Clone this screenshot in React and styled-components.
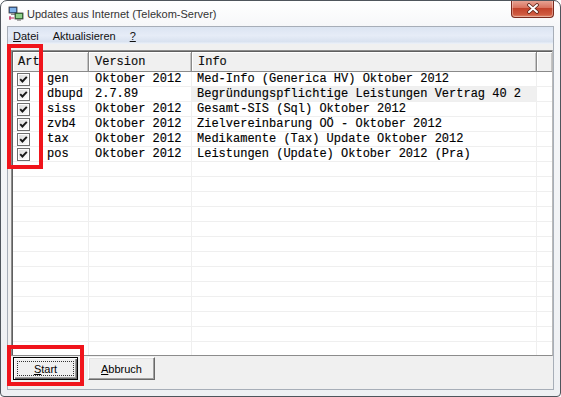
import styled, { createGlobalStyle } from "styled-components"

const GlobalStyle = createGlobalStyle`
  html, body { margin: 0; padding: 0; background: #ffffff; }
  #root { width: 561px; height: 397px; }
`

const COLS = "76px 103px 345px 1fr"

const rows = [
  { art: "gen", version: "Oktober 2012", info: "Med-Info (Generica HV) Oktober 2012" },
  { art: "dbupd", version: "2.7.89", info: "Begründungspflichtige Leistungen Vertrag 40 2", tip: true },
  { art: "siss", version: "Oktober 2012", info: "Gesamt-SIS (Sql) Oktober 2012" },
  { art: "zvb4", version: "Oktober 2012", info: "Zielvereinbarung OÖ - Oktober 2012" },
  { art: "tax", version: "Oktober 2012", info: "Medikamente (Tax) Update Oktober 2012" },
  { art: "pos", version: "Oktober 2012", info: "Leistungen (Update) Oktober 2012 (Pra)" },
]

const EMPTY_ROWS = 14

const Window = styled.div`
  position: relative;
  box-sizing: border-box;
  width: 561px;
  height: 397px;
  border: 1px solid #4f555c;
  border-radius: 7px 7px 4px 4px;
  background: linear-gradient(to bottom, #ffffff 0, #f6f7f9 26px, #eef0f3 100%);
  padding: 0 6px 6px;
  display: flex;
  flex-direction: column;
  overflow: hidden;
  font-family: "Liberation Sans", Arial, sans-serif;
`

const TitleBar = styled.div`
  height: 25px;
  display: flex;
  align-items: center;
  flex-shrink: 0;
`

const TitleIcon = styled.svg`
  width: 16px;
  height: 16px;
  margin-left: 1px;
  margin-right: 3px;
`

const TitleText = styled.span`
  font-size: 11px;
  color: #333;
`

const CloseButton = styled.div`
  margin-left: auto;
  align-self: flex-start;
  margin-top: -1px;
  width: 43px;
  height: 18px;
  box-sizing: border-box;
  border: 1px solid #7a2a1e;
  border-top: none;
  border-radius: 0 0 4px 4px;
  background: linear-gradient(to bottom, #e9a99a 0, #d9735f 45%, #c2432c 50%, #cf5a40 85%, #e08a6e 100%);
  box-shadow: inset 0 0 0 1px rgba(255, 255, 255, 0.35);
  display: flex;
  align-items: center;
  justify-content: center;
`

const Client = styled.div`
  flex: 1;
  display: flex;
  flex-direction: column;
  border: 1px solid #a7aeb8;
  background: #f0f0f0;
`

const MenuBar = styled.div`
  height: 17px;
  flex-shrink: 0;
  display: flex;
  align-items: center;
  background: linear-gradient(to bottom, #dbe4f2 0, #e6ecf7 50%, #d9e2f0 85%, #eef2f9 100%);
  font-size: 11px;
  color: #111;
`

const MenuItem = styled.span`
  padding: 0 7px;
  &:first-child { padding-left: 5px; }
  u { text-decoration: underline; text-underline-offset: 1px; }
`

const ListView = styled.div`
  margin: 6px 0 0 3px;
  height: 306px;
  box-sizing: border-box;
  flex-shrink: 0;
  border: 1px solid #8c8c8c;
  border-right-color: #b9b9b9;
  background: #ffffff;
  display: flex;
  flex-direction: column;
  overflow: hidden;
`

const ListInner = styled.div`
  flex: 1;
  border-top: 1px solid #5f5f5f;
  border-left: 1px solid #5f5f5f;
  display: flex;
  flex-direction: column;
  overflow: hidden;
  font-family: "Liberation Mono", "Courier New", monospace;
  font-size: 12px;
  color: #000;
  -webkit-text-stroke: 0.15px #000;
`

const Header = styled.div`
  display: grid;
  grid-template-columns: ${COLS};
  height: 20px;
  flex-shrink: 0;
  background: #f0f0f0;
  border-bottom: 1px solid #8a8a8a;
  box-sizing: border-box;
`

const HeaderCell = styled.div`
  display: flex;
  align-items: center;
  padding-left: ${p => p.$pad || 6}px;
  border-right: 1px solid #8a8a8a;
  box-shadow: inset 1px 1px 0 #ffffff, inset -1px 0 0 #c4c4c4;
  color: #111;
  &:last-child { border-right: none; }
`

const Row = styled.div`
  display: grid;
  grid-template-columns: ${COLS};
  height: 15px;
  flex-shrink: 0;
  box-sizing: border-box;
  border-bottom: 1px solid #efefef;
`

const Cell = styled.div`
  display: flex;
  align-items: center;
  padding-left: ${p => p.$pad || 5}px;
  border-right: 1px solid #efefef;
  background: ${p => (p.$tip ? "#f0f0f0" : "transparent")};
  white-space: nowrap;
  overflow: hidden;
  &:last-child { border-right: none; }
`

const CheckBox = styled.svg`
  width: 13px;
  height: 13px;
  margin-right: 17px;
  flex-shrink: 0;
`

const ButtonBar = styled.div`
  flex: 1;
  display: flex;
  align-items: flex-start;
  gap: 10px;
  padding: 1px 0 0 5px;
`

const Button = styled.button`
  box-sizing: border-box;
  width: ${p => p.$w}px;
  height: 23px;
  padding: 0;
  margin: 0;
  background: #f0f0f0;
  font-family: "Liberation Sans", Arial, sans-serif;
  font-size: 11px;
  color: #000;
  border: 1px solid;
  border-color: #ffffff #696969 #696969 #ffffff;
  box-shadow: inset -1px -1px 0 #a0a0a0, inset 1px 1px 0 #e3e3e3;
  position: relative;
  u { text-decoration: underline; text-underline-offset: 1px; }
  ${p => p.$default && `
    border-color: #000;
    box-shadow: inset 1px 1px 0 #ffffff, inset -1px -1px 0 #696969, inset -2px -2px 0 #a0a0a0;
    &::after {
      content: "";
      position: absolute;
      inset: 3px;
      border: 1px dotted #333;
    }
  `}
`

const Marker = styled.div`
  position: absolute;
  left: ${p => p.$x}px;
  top: ${p => p.$y}px;
  width: ${p => p.$w}px;
  height: ${p => p.$h}px;
  box-sizing: border-box;
  border: 4px solid #f0141b;
  pointer-events: none;
`

function Check() {
  return (
    <CheckBox viewBox="0 0 13 13">
      <defs>
        <linearGradient id="cbg" x1="0" y1="0" x2="1" y2="1">
          <stop offset="0" stopColor="#dcdcdc" />
          <stop offset="1" stopColor="#ffffff" />
        </linearGradient>
      </defs>
      <rect x="0.5" y="0.5" width="12" height="12" fill="#fff" stroke="#6f6f6f" />
      <rect x="2" y="2" width="9" height="9" fill="url(#cbg)" />
      <path d="M3.2 6.2 L5.4 8.5 L9.8 3.8" fill="none" stroke="#1a1a1a" strokeWidth="1.9" />
    </CheckBox>
  )
}

function NetIcon() {
  return (
    <TitleIcon viewBox="0 0 16 16">
      <rect x="1" y="1" width="8" height="6" fill="#3d6db5" stroke="#3a3a3a" strokeWidth="0.8" />
      <rect x="2" y="2" width="6" height="4" fill="#7fb2e8" />
      <rect x="3" y="7.5" width="4" height="1.5" fill="#8a8a8a" />
      <rect x="7" y="7" width="8" height="6" fill="#3a8a3a" stroke="#3a3a3a" strokeWidth="0.8" />
      <rect x="8" y="8" width="6" height="4" fill="#8fd08a" />
      <rect x="9" y="13.2" width="4" height="1.5" fill="#8a8a8a" />
      <path d="M1 12 H6 M2 10 V14" stroke="#c03060" strokeWidth="1.2" />
    </TitleIcon>
  )
}

export default function App() {
  return (
    <>
      <GlobalStyle />
      <Window>
        <TitleBar>
          <NetIcon />
          <TitleText>Updates aus Internet (Telekom-Server)</TitleText>
          <CloseButton>
            <svg width="14" height="11" viewBox="0 0 14 11">
              <path d="M3 2 L11 9 M11 2 L3 9" stroke="#5a2318" strokeWidth="3.6" strokeLinecap="round" />
              <path d="M3 2 L11 9 M11 2 L3 9" stroke="#ffffff" strokeWidth="2" strokeLinecap="round" />
            </svg>
          </CloseButton>
        </TitleBar>

        <Client>
          <MenuBar>
            <MenuItem><u>D</u>atei</MenuItem>
            <MenuItem>Aktualisieren</MenuItem>
            <MenuItem><u>?</u></MenuItem>
          </MenuBar>

          <ListView>
            <ListInner>
              <Header>
                <HeaderCell $pad={5}>Art</HeaderCell>
                <HeaderCell>Version</HeaderCell>
                <HeaderCell>Info</HeaderCell>
                <HeaderCell />
              </Header>
              {rows.map(r => (
                <Row key={r.art}>
                  <Cell $pad={4}><Check />{r.art}</Cell>
                  <Cell $pad={6}>{r.version}</Cell>
                  <Cell $tip={r.tip}>{r.info}</Cell>
                  <Cell />
                </Row>
              ))}
              {Array.from({ length: EMPTY_ROWS }).map((_, i) => (
                <Row key={"e" + i}>
                  <Cell />
                  <Cell />
                  <Cell />
                  <Cell />
                </Row>
              ))}
            </ListInner>
          </ListView>

          <ButtonBar>
            <Button $w={65} $default><u>S</u>tart</Button>
            <Button $w={67}><u>A</u>bbruch</Button>
          </ButtonBar>
        </Client>

        <Marker $x={6} $y={43} $w={36} $h={125} />
        <Marker $x={6} $y={344} $w={77} $h={41} />
      </Window>
    </>
  )
}
